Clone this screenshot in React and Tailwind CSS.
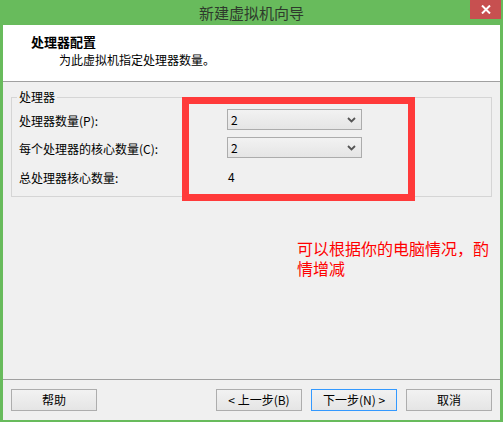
import React from "react";

function Chevron() {
  return (
    <svg width="9" height="6" viewBox="0 0 9 6" className="shrink-0">
      <path d="M1 1 L4.5 4.5 L8 1" fill="none" stroke="#555" strokeWidth="1.8" />
    </svg>
  );
}

function Select({ value }) {
  return (
    <div className="h-[21px] w-[135px] border border-[#acacac] bg-gradient-to-b from-[#f2f2f2] to-[#e5e5e5] flex items-center justify-between pl-[3px] pr-[5px] text-[12px] leading-[16px] text-black">
      <span>{value}</span>
      <Chevron />
    </div>
  );
}

function Button({ children, primary }) {
  return (
    <div
      className={
        "h-[22px] w-[86px] border flex items-center justify-center text-[12px] leading-[16px] text-black bg-gradient-to-b from-[#f2f2f2] to-[#e5e5e5] " +
        (primary ? "border-[#3399ff]" : "border-[#adadad]")
      }
    >
      {children}
    </div>
  );
}

export default function App() {
  return (
    <div className="relative w-[503px] h-[422px] bg-[#68bb5c] flex flex-col font-['Noto_Sans_CJK_SC','Noto_Sans',sans-serif] overflow-hidden">
      {/* Title bar */}
      <div className="relative h-[25px] shrink-0 flex items-center justify-center">
        <span className="text-[15px] leading-[18px] text-[#2e3a2c]">新建虚拟机向导</span>
        <div className="absolute right-[2px] top-0 w-[31px] h-[19px] bg-[#c75050] flex items-center justify-center">
          <svg width="10" height="9" viewBox="0 0 10 9">
            <path d="M1 0.5 L9 8.5 M9 0.5 L1 8.5" stroke="white" strokeWidth="2" />
          </svg>
        </div>
      </div>

      {/* Content */}
      <div className="mx-[3px] mb-[2px] flex-1 flex flex-col bg-[#f0f0f0]">
        {/* Header */}
        <div className="h-[57px] shrink-0 bg-white border-b border-[#a0a0a0] pt-[9px]">
          <div className="pl-[28px] text-[13px] leading-[16px] font-bold text-black">处理器配置</div>
          <div className="pl-[56px] mt-[2px] text-[12px] leading-[16px] text-black">为此虚拟机指定处理器数量。</div>
        </div>

        {/* Body */}
        <div className="flex-1 flex flex-col">
          <div className="relative mt-[15px] ml-[8px] w-[481px] border border-[#d5d5d5] pt-[11px] pb-[10px] pl-[7px]">
            <span className="absolute -top-[9px] left-[5px] px-[2px] bg-[#f0f0f0] text-[12px] leading-[16px] text-black">处理器</span>
            <div className="grid grid-cols-[208px_135px] gap-y-[7px] items-center text-[12px] leading-[16px] text-black">
              <div className="pt-[3px]">处理器数量(P):</div>
              <Select value="2" />
              <div className="pt-[3px]">每个处理器的核心数量(C):</div>
              <Select value="2" />
              <div className="mt-[3px] pt-[2px]">总处理器核心数量:</div>
              <div className="mt-[3px] pl-[1px]">4</div>
            </div>
          </div>
        </div>

        {/* Footer */}
        <div className="h-[41px] shrink-0 border-t border-[#a0a0a0] flex items-start pt-[9px] px-[8px]">
          <Button>帮助</Button>
          <div className="flex-1" />
          <div className="flex gap-[9px]">
            <Button>&lt; 上一步(B)</Button>
            <Button primary>下一步(N) &gt;</Button>
            <Button>取消</Button>
          </div>
        </div>
      </div>

      {/* Annotations */}
      <div className="absolute left-[182px] top-[97px] w-[233px] h-[104px] border-[7px] border-[#ff3a3a]" />
      <div className="absolute left-[297px] top-[238px] text-[16px] leading-[20px] text-[#ff0000]">
        可以根据你的电脑情况，酌
        <br />
        情增减
      </div>
    </div>
  );
}
